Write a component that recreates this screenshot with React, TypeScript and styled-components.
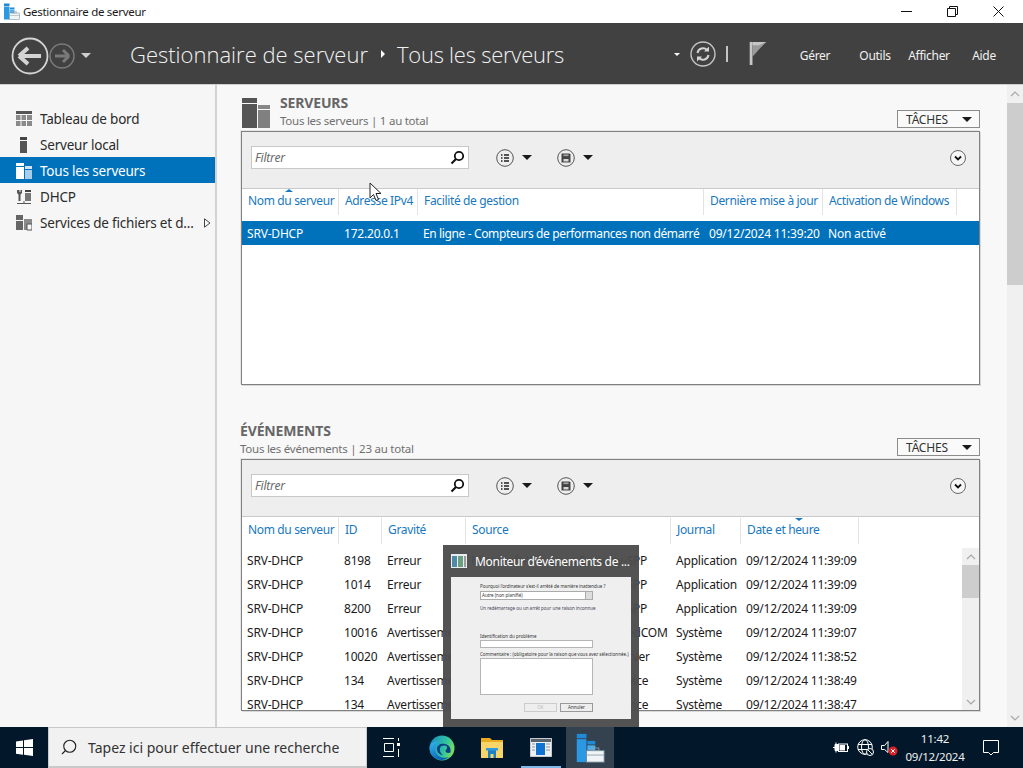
import React from 'react';
import styled, { createGlobalStyle } from 'styled-components';
import { Search } from 'lucide-react';

const FONT = `"Noto Sans", "Open Sans", "Liberation Sans", sans-serif`;

const GlobalStyle = createGlobalStyle`
  html, body { margin: 0; padding: 0; background: #f8f8f8; }
  #root { width: 1023px; height: 768px; }
  * { box-sizing: border-box; }
`;

const Screen = styled.div`
  position: relative;
  width: 1023px;
  height: 768px;
  display: flex;
  flex-direction: column;
  overflow: hidden;
  font-family: ${FONT};
  font-size: 12px;
  letter-spacing: -0.2px;
  color: #1a1a1a;
`;

/* barre de titre */
const TitleBar = styled.div`
  height: 23px;
  flex: none;
  background: #fff;
  display: flex;
  align-items: center;
  padding-left: 3px;
  gap: 3px;
  font-size: 11.5px;
  letter-spacing: -0.3px;
`;
const TitleText = styled.span`
  flex: 1;
`;
const WinButtons = styled.div`
  display: flex;
  height: 23px;
  margin-right: 2px;
`;
const WinButton = styled.div`
  width: 46px;
  display: flex;
  align-items: center;
  justify-content: center;
`;

/* bandeau sombre */
const Header = styled.header`
  height: 62px;
  flex: none;
  background: #414141;
  border-bottom: 1px solid #cfcfcf;
  display: flex;
  align-items: center;
  color: #fff;
  padding: 4px 0 0 11px;
`;
const NavGroup = styled.div`
  width: 119px;
  display: flex;
  align-items: center;
`;
const Crumb = styled.div`
  display: flex;
  align-items: center;
  margin-bottom: 4px;
  font-family: "Open Sans", ${FONT};
  font-weight: 300;
  font-size: 22px;
  letter-spacing: 0;
  color: #f2f2f2;
  flex: 1;
`;
const CrumbArrow = styled.span`
  width: 0;
  height: 0;
  margin: 0 12px 0 13px;
  border-left: 4px solid #fff;
  border-top: 4px solid transparent;
  border-bottom: 4px solid transparent;
`;
const CrumbCurrent = styled.span`
  letter-spacing: -0.25px;
`;
const HeaderTools = styled.div`
  display: flex;
  align-items: center;
  margin-right: 17px;
  padding-bottom: 3px;
`;
const ToolDivider = styled.span`
  width: 2px;
  height: 16px;
  background: #c4c4c4;
  margin: 0 21px 0 10px;
`;
const FlagSvg = styled.svg`
  margin-bottom: 3px;
`;
const Menu = styled.nav`
  display: flex;
  align-items: center;
  height: 100%;
  margin-right: 9px;
  font-size: 12px;
  letter-spacing: -0.3px;
  color: #f0f0f0;
`;
const MenuItem = styled.span<{ $w: number }>`
  width: ${(p) => p.$w}px;
  text-align: center;
`;

/* corps */
const Body = styled.div`
  flex: 1;
  display: flex;
  min-height: 0;
`;
const Sidebar = styled.aside`
  width: 217px;
  flex: none;
  background: #f6f6f6;
  border-right: 2px solid #d2d2d2;
  padding-top: 20px;
`;
const SideItem = styled.div<{ $active?: boolean }>`
  height: 26px;
  padding: 1px 0 0 16px;
  display: flex;
  align-items: center;
  gap: 8px;
  width: 215px;
  background: ${(p) => (p.$active ? '#0072bc' : 'transparent')};
  color: ${(p) => (p.$active ? '#fff' : '#2b2b2b')};
  font-size: 13.5px;
`;
const SideLabel = styled.span`
  flex: 1;
  white-space: nowrap;
`;
const SideCaret = styled.svg`
  margin-right: 4px;
`;
const Content = styled.main`
  flex: 1;
  min-width: 0;
  background: #f8f8f8;
  padding: 10px 27px 0 24px;
  overflow: hidden;
`;

const Section = styled.section<{ $gap?: number }>`
  margin-top: ${(p) => p.$gap ?? 0}px;
`;
const SectionHead = styled.div`
  display: flex;
  align-items: flex-end;
  height: 36px;
  padding-bottom: 1px;
`;
const SectionIcon = styled.span`
  display: flex;
  margin: 0 9px 2px 1px;
`;
const SectionTitles = styled.div`
  flex: 1;
  line-height: 18px;
`;
const SectionTitle = styled.div<{ $shift?: number }>`
  margin-left: ${(p) => p.$shift ?? 0}px;
  font-weight: 700;
  font-size: 14px;
  letter-spacing: -0.15px;
  color: #666;
`;
const SectionSub = styled.div<{ $shift?: number }>`
  margin-left: ${(p) => p.$shift ?? 0}px;
  color: #707070;
  font-size: 11.5px;
  letter-spacing: -0.25px;
`;
const TasksButton = styled.div`
  width: 83px;
  height: 18px;
  margin-bottom: 2px;
  border: 1px solid #8c8c8c;
  background: #fafafa;
  display: flex;
  align-items: center;
  justify-content: space-between;
  padding: 0 7px 0 8px;
  font-size: 12px;
  color: #333;
`;
const Caret = styled.span<{ $size?: number; $color?: string; $after?: number; $before?: number }>`
  width: 0;
  height: 0;
  margin-left: ${(p) => p.$before ?? 0}px;
  margin-right: ${(p) => p.$after ?? 0}px;
  border-left: ${(p) => p.$size ?? 5}px solid transparent;
  border-right: ${(p) => p.$size ?? 5}px solid transparent;
  border-top: ${(p) => p.$size ?? 5}px solid ${(p) => p.$color ?? '#1a1a1a'};
`;

const Panel = styled.div<{ $h: number }>`
  height: ${(p) => p.$h}px;
  border: 1px solid #808080;
  background: #fff;
  box-shadow: 1px 1px 0 #d8d8d8, -1px -1px 0 #e6e6e6;
  display: flex;
  flex-direction: column;
  overflow: hidden;
`;
const Toolbar = styled.div`
  height: 57px;
  flex: none;
  background: #eeeeee;
  border-bottom: 1px solid #c9c9c9;
  display: flex;
  align-items: center;
  padding: 0 13px 5px 9px;
`;
const FilterBox = styled.div`
  width: 218px;
  height: 23px;
  background: #fff;
  border: 1px solid #c8c8c8;
  display: flex;
  align-items: center;
  justify-content: space-between;
  padding: 0 3px;
  font-style: italic;
  font-size: 12px;
  color: #6a6a6a;
  margin-right: 27px;
`;
const RoundTool = styled.div`
  display: flex;
  align-items: center;
  gap: 8px;
  width: 61px;
  height: 23px;
`;
const Spacer = styled.div`
  flex: 1;
`;
const Columns = styled.div<{ $cols: string; $h: number; $top?: number }>`
  flex: none;
  height: ${(p) => p.$h}px;
  padding-top: ${(p) => p.$top ?? 0}px;
  display: grid;
  grid-template-columns: ${(p) => p.$cols};
  background: #fff;
`;
const Column = styled.div`
  position: relative;
  height: 26px;
  padding: 3px 0 0 6px;
  border-right: 1px solid #e3e3e3;
  color: #1878c0;
  font-size: 12px;
  letter-spacing: -0.35px;
  white-space: nowrap;
`;
const SortMark = styled.span<{ $down?: boolean; $left: number }>`
  position: absolute;
  top: 0;
  left: ${(p) => p.$left}px;
  width: 0;
  height: 0;
  border-left: 4px solid transparent;
  border-right: 4px solid transparent;
  ${(p) => (p.$down ? 'border-top: 3px solid #1878c0;' : 'border-bottom: 3px solid #1878c0;')}
`;
const Row = styled.div<{ $cols: string; $selected?: boolean }>`
  height: 24px;
  flex: none;
  display: grid;
  grid-template-columns: ${(p) => p.$cols};
  align-items: center;
  background: ${(p) => (p.$selected ? '#0072bc' : '#fff')};
  color: ${(p) => (p.$selected ? '#fff' : '#1a1a1a')};
`;
const Cell = styled.div<{ $tight?: boolean }>`
  padding-left: 5px;
  white-space: nowrap;
  letter-spacing: ${(p) => (p.$tight ? '-0.37px' : 'inherit')};
`;
const ListArea = styled.div`
  flex: 1;
  min-height: 0;
  display: flex;
`;
const ListRows = styled.div`
  flex: 1;
  overflow: hidden;
`;

const ScrollTrack = styled.div<{ $w: number }>`
  width: ${(p) => p.$w}px;
  flex: none;
  background: #f0f0f0;
  display: flex;
  flex-direction: column;
`;
const ScrollArrow = styled.div<{ $h: number }>`
  height: ${(p) => p.$h}px;
  flex: none;
  display: flex;
  align-items: center;
  justify-content: center;
`;
const ScrollThumb = styled.div<{ $h: number }>`
  height: ${(p) => p.$h}px;
  flex: none;
  background: #cdcdcd;
`;
const ScrollRest = styled.div`
  flex: 1;
`;

/* barre des tâches */
const Taskbar = styled.footer`
  height: 41px;
  flex: none;
  background: #02182a;
  display: flex;
  align-items: stretch;
  color: #fff;
`;
const StartButton = styled.div`
  width: 48px;
  display: flex;
  align-items: center;
  justify-content: center;
`;
const SearchBar = styled.div`
  width: 319px;
  background: #f1f1f1;
  border: 1px solid #c9c9c9;
  border-bottom-width: 2px;
  display: flex;
  align-items: center;
  gap: 10px;
  padding-left: 11px;
  color: #333;
  font-size: 14px;
  letter-spacing: 0;
`;
const TaskSlot = styled.div<{ $w: number; $active?: boolean; $open?: boolean }>`
  position: relative;
  width: ${(p) => p.$w}px;
  display: flex;
  align-items: center;
  justify-content: center;
  background: ${(p) => (p.$active ? '#33424e' : 'transparent')};
  ${(p) =>
    p.$open &&
    `&::after {
      content: '';
      position: absolute;
      left: 5px;
      right: 5px;
      bottom: 0;
      height: 2px;
      background: #7fb8e6;
    }`}
`;
const Tray = styled.div`
  flex: 1;
  display: flex;
  align-items: center;
  justify-content: flex-end;
`;
const TrayIcon = styled.span<{ $w: number }>`
  width: ${(p) => p.$w}px;
  display: flex;
  justify-content: center;
`;
const Clock = styled.div`
  width: 72px;
  text-align: center;
  font-size: 11.5px;
  line-height: 18px;
  letter-spacing: -0.2px;
  color: #f0f0f0;
`;
const NotifSlot = styled.div`
  width: 40px;
  margin-right: 12px;
  display: flex;
  justify-content: center;
`;

/* aperçu de fenêtre */
const Peek = styled.div`
  position: absolute;
  left: 443px;
  top: 545px;
  width: 196px;
  height: 182px;
  background: rgba(76, 76, 76, 0.96);
  padding: 0 8px;
  color: #fff;
`;
const PeekTitle = styled.div`
  height: 32px;
  display: flex;
  align-items: center;
  gap: 8px;
  font-size: 12px;
  letter-spacing: -0.3px;
  white-space: nowrap;
  overflow: hidden;
`;
const PeekBody = styled.div`
  width: 180px;
  height: 142px;
  background: #efefef;
  padding: 6px 38px 0 29px;
  color: #333;
  font-size: 4.5px;
  letter-spacing: 0;
  line-height: 7px;
  white-space: nowrap;
`;
const PeekSelect = styled.div`
  display: flex;
  justify-content: space-between;
  height: 9px;
  margin-top: 1px;
  background: #fff;
  border: 1px solid #aaa;
  line-height: 7px;
  padding-left: 1px;
`;
const PeekSelectArrow = styled.span`
  width: 7px;
  background: #ddd;
  border-left: 1px solid #aaa;
`;
const PeekNote = styled.div`
  margin-top: 5px;
  margin-bottom: 21px;
  color: #445;
`;
const PeekInput = styled.div<{ $h: number }>`
  height: ${(p) => p.$h}px;
  background: #fff;
  border: 1px solid #b5b5b5;
  margin-bottom: 3px;
`;
const PeekButtons = styled.div`
  display: flex;
  justify-content: flex-end;
  gap: 3px;
  margin-top: 8px;
`;
const PeekButton = styled.div<{ $off?: boolean }>`
  width: 33px;
  height: 9px;
  background: #eee;
  border: 1px solid ${(p) => (p.$off ? '#ccc' : '#999')};
  color: ${(p) => (p.$off ? '#bbb' : '#333')};
  text-align: center;
  line-height: 7px;
`;
const Pointer = styled.svg`
  position: absolute;
  left: 369px;
  top: 182px;
`;
const NoShrink = styled.span`
  display: flex;
  flex: none;
`;

/* icônes */
const AppIcon = ({ size = 17 }: { size?: number }) => (
  <svg width={size} height={size} viewBox="0 0 34 34">
    <rect x="2" y="1" width="11" height="5" fill="#1f8ad6" />
    <rect x="2" y="7" width="11" height="26" fill="#2b98e4" />
    <rect x="14" y="9" width="9" height="4" fill="#1f8ad6" />
    <rect x="14" y="14" width="9" height="6" fill="#4aaeea" />
    <rect x="13" y="20" width="20" height="13" fill="#f0f4f6" stroke="#6e8796" />
    <rect x="19" y="17" width="8" height="3" fill="none" stroke="#8aa0ad" />
    <path d="M13 25h20" stroke="#8aa0ad" />
  </svg>
);
const ArrowCircle = ({ size, color, sw }: { size: number; color: string; sw: number }) => (
  <svg width={size} height={size} viewBox="0 0 38 38">
    <circle cx="19" cy="19" r="17.5" fill="none" stroke={color} strokeWidth={sw} />
    <path d="M8 19h22M8 19l9-8M8 19l9 8" fill="none" stroke={color} strokeWidth="4" />
  </svg>
);
const ForwardCircle = () => (
  <svg width="26" height="26" viewBox="0 0 26 26">
    <circle cx="13" cy="13" r="12" fill="none" stroke="#7a7a7a" strokeWidth="1.5" />
    <path d="M20 13H6M20 13l-6-6M20 13l-6 6" fill="none" stroke="#7a7a7a" strokeWidth="3" />
  </svg>
);
const RefreshCircle = () => (
  <svg width="26" height="26" viewBox="0 0 26 26">
    <circle cx="13" cy="13" r="12" fill="none" stroke="#c4c4c4" strokeWidth="1.4" />
    <path d="M7.500 12a5.600 5.600 0 0 1 9.600-3M18.500 14a5.600 5.600 0 0 1-9.600 3" fill="none" stroke="#d4d4d4" strokeWidth="2" />
    <path d="M19 5.500v5h-5zM7 20.500v-5h5z" fill="#d4d4d4" />
  </svg>
);
const Flag = () => (
  <FlagSvg width="18" height="24" viewBox="0 0 18 26">
    <rect x="0" y="1" width="3" height="25" fill="#c6c6c6" />
    <path d="M3 1h15l-7 7-8 9z" fill="#9a9a9a" />
    <path d="M3 1h15l-8 3.500H3z" fill="#c6c6c6" />
  </FlagSvg>
);
const Minimize = () => (
  <svg width="11" height="11" viewBox="0 0 11 11"><path d="M0 5.500h11" stroke="#111" /></svg>
);
const Restore = () => (
  <svg width="11" height="11" viewBox="0 0 11 11">
    <path d="M.5 2.500h8v8h-8zM2.500 2.500v-2h8v8h-2" fill="none" stroke="#111" />
  </svg>
);
const Close = () => (
  <svg width="11" height="11" viewBox="0 0 11 11"><path d="M.5.500l10 10M10.500.500l-10 10" stroke="#111" /></svg>
);
const DashIcon = () => (
  <svg width="16" height="16" viewBox="0 0 16 16">
    <rect y="0" width="16" height="3" fill="#555" />
    <path d="M0 4h4.500v5H0zM5.500 4H10v5H5.500zM11 4h5v5h-5zM0 10h4.500v5H0zM5.500 10H10v5H5.500zM11 10h5v5h-5z" fill="#8a8a8a" />
  </svg>
);
const LocalIcon = () => (
  <svg width="16" height="16" viewBox="0 0 16 16">
    <rect x="4" y="0" width="7" height="3" fill="#444" />
    <rect x="4" y="4" width="7" height="12" fill="#555" />
  </svg>
);
const AllIcon = () => (
  <svg width="16" height="16" viewBox="0 0 16 16">
    <rect y="0" width="8" height="3" fill="#fff" />
    <rect y="4" width="8" height="12" fill="#fff" />
    <rect x="9" y="3" width="7" height="3" fill="#cfe3f3" />
    <rect x="9" y="7" width="7" height="9" fill="#a8cdea" />
  </svg>
);
const DhcpIcon = () => (
  <svg width="16" height="16" viewBox="0 0 16 16">
    <path d="M1 1v3l1.500 1.500V12h2V5.500L6 4V1L4.500 1v2h-1V1z" fill="#555" />
    <rect x="9" y="1" width="6" height="2" fill="#444" />
    <rect x="9" y="4" width="6" height="8" fill="#777" />
    <path d="M1 14.500h14M8 12v3" stroke="#555" />
  </svg>
);
const FilesIcon = () => (
  <svg width="16" height="16" viewBox="0 0 16 16">
    <path d="M0 0h7v5H0zM0 6h7v9H0z" fill="#666" />
    <path d="M8 4h8v11H8z" fill="#8a8a8a" />
    <path d="M11 9h5v6h-5z" fill="#f6f6f6" stroke="#555" />
  </svg>
);
const ServersBig = () => (
  <svg width="29" height="30" viewBox="0 0 29 30">
    <rect x="0" y="0" width="15" height="5" fill="#555" />
    <rect x="0" y="6" width="15" height="24" fill="#555" />
    <rect x="16" y="7" width="12" height="4" fill="#888" />
    <rect x="16" y="12" width="12" height="18" fill="#808080" />
  </svg>
);
const Magnifier = () => (
  <svg width="15" height="15" viewBox="0 0 15 15">
    <circle cx="9" cy="6" r="4.200" fill="none" stroke="#111" strokeWidth="1.800" />
    <path d="M6 9l-4.500 4.500" stroke="#111" strokeWidth="2.200" />
  </svg>
);
const ListRound = () => (
  <svg width="18" height="18" viewBox="0 0 18 18">
    <circle cx="9" cy="9" r="8.300" fill="none" stroke="#555" />
    <path d="M5 6h1.500M5 9h1.500M5 12h1.500M8 6h5M8 9h5M8 12h5" stroke="#222" strokeWidth="1.600" />
  </svg>
);
const SaveRound = () => (
  <svg width="18" height="18" viewBox="0 0 18 18">
    <circle cx="9" cy="9" r="8.300" fill="none" stroke="#555" />
    <path d="M4.500 4.500h8l1 1v8h-9z" fill="#444" />
    <rect x="6.500" y="5.500" width="5" height="1.600" fill="#a8a8a8" />
    <rect x="6.500" y="10" width="5" height="2.500" fill="#d8d8d8" />
  </svg>
);
const ChevronRound = () => (
  <svg width="16" height="16" viewBox="0 0 16 16">
    <circle cx="8" cy="8" r="7.500" fill="#f6f6f6" stroke="#666" />
    <path d="M5 6.500l3 3 3-3" fill="none" stroke="#111" strokeWidth="1.800" />
  </svg>
);
const ScrollChevron = ({ down }: { down?: boolean }) => (
  <svg width="10" height="6" viewBox="0 0 10 6">
    <path d={down ? 'M1 1l4 4 4-4' : 'M1 5l4-4 4 4'} fill="none" stroke="#a8a8a8" strokeWidth="1.200" />
  </svg>
);
const WindowsLogo = () => (
  <svg width="17" height="17" viewBox="0 0 17 17">
    <path d="M0 2.400l7-1v6.700H0zM8 1.300L17 0v8.100H8zM0 9h7v6.700l-7-1zM8 9h9v8l-9-1.300z" fill="#fff" />
  </svg>
);
const TaskView = () => (
  <svg width="17" height="19" viewBox="0 0 17 19">
    <path d="M0 .5h11M0 18.500h11M1.500 5.500h9v8h-9z" fill="none" stroke="#fff" />
    <rect x="14" y="5" width="3" height="3" fill="#fff" />
    <path d="M15.500 0v3M15.500 11v8" stroke="#fff" />
  </svg>
);
const EdgeLogo = () => (
  <svg width="26" height="26" viewBox="0 0 26 26">
    <defs>
      <linearGradient id="edgeTop" x1="0" y1="0.300" x2="1" y2="0.600">
        <stop offset="0" stopColor="#1a8fc8" />
        <stop offset="0.600" stopColor="#2fc4a0" />
        <stop offset="1" stopColor="#7ee05a" />
      </linearGradient>
      <linearGradient id="edgeLow" x1="0" y1="0" x2="0.600" y2="1">
        <stop offset="0" stopColor="#35b8f0" />
        <stop offset="1" stopColor="#0a5db0" />
      </linearGradient>
    </defs>
    <circle cx="13" cy="13" r="12.500" fill="url(#edgeTop)" />
    <path d="M.6 13C1 8 6 5.500 10 7c-4 2-5 7-3 11 2 4 8 6 13 4-2.500 2-5 3-7.500 3C6 25 .4 20 .6 13z" fill="url(#edgeLow)" />
    <path d="M8 14c0-4 4-6 8-5 5 1 6 5 5.500 8.500-2 1-5 .5-5-1.500 0-1.500 2-2 1.500-4-1-2-6-2-7 1-.6 2 0 5 3 7.500C10 19.500 8 17 8 14z" fill="#0b3f86" />
  </svg>
);
const FolderIcon = () => (
  <svg width="22" height="21" viewBox="0 0 22 21">
    <path d="M0 1h9l2 2h11v18H0z" fill="#e9ac20" />
    <rect x="0" y="5" width="22" height="16" fill="#f8d568" />
    <path d="M7 21v-8h8v8h-2.500v-4h-3v4z" fill="#1d7fc4" />
    <rect x="5" y="11" width="12" height="2.500" fill="#2f9ae0" />
  </svg>
);
const EventIcon = () => (
  <svg width="22" height="19" viewBox="0 0 22 19">
    <rect x="0" y="0" width="22" height="19" fill="#eef1f3" stroke="#9aa3a9" />
    <rect x="1" y="1" width="20" height="3" fill="#59636b" />
    <rect x="6" y="5" width="9" height="12" fill="#1172cf" />
    <path d="M2 6h3M2 9h3M2 12h3M16 6h4M16 9h4M16 12h4" stroke="#8a949b" />
  </svg>
);
const PeekIcon = () => (
  <svg width="16" height="14" viewBox="0 0 16 14">
    <rect width="16" height="14" fill="#e8edf0" />
    <rect x="1" y="2" width="5" height="11" fill="#4f8ba8" />
    <rect x="7" y="2" width="5" height="11" fill="#6aa07f" />
    <rect x="13" y="2" width="2" height="11" fill="#9a9a9a" />
  </svg>
);
const PowerIcon = () => (
  <svg width="16" height="13" viewBox="0 0 16 13">
    <path d="M0 6.500h2M2 3.500h3v6H2zM3 1.500v2M3 9.500v2" stroke="#fff" fill="#fff" />
    <rect x="5.500" y="3" width="9" height="7.500" fill="#02182a" stroke="#fff" />
    <rect x="6.500" y="4" width="5.500" height="5.500" fill="#fff" />
    <rect x="15" y="5" width="1" height="3" fill="#fff" />
  </svg>
);
const GlobeIcon = () => (
  <svg width="17" height="17" viewBox="0 0 17 17">
    <g fill="none" stroke="#fff">
      <circle cx="8" cy="8" r="7.300" />
      <ellipse cx="8" cy="8" rx="3.500" ry="7.300" />
      <path d="M1 5.500h14M1 10.500h14" />
    </g>
    <circle cx="13" cy="13" r="3.500" fill="#02182a" stroke="#fff" />
    <path d="M11 11l4 4" stroke="#fff" />
  </svg>
);
const SoundIcon = () => (
  <svg width="17" height="17" viewBox="0 0 17 17">
    <path d="M.5 6.500h3l3.500-4v11l-3.500-3h-3z" fill="none" stroke="#fff" />
    <circle cx="12" cy="12" r="4.500" fill="#d8202a" />
    <path d="M10.200 10.200l3.600 3.600M13.800 10.200l-3.600 3.600" stroke="#fff" />
  </svg>
);
const NotifIcon = () => (
  <svg width="17" height="16" viewBox="0 0 17 16">
    <path d="M.5.500h15v12h-5l-2.500 2.500-2.500-2.500h-5z" fill="none" stroke="#fff" />
  </svg>
);

const serverCols = '97px 79px 286px 119px 134px 1fr';
const eventCols = '97px 43px 84px 205px 70px 118px 1fr';

const eventRows = [
  ['8198', 'Erreur', 'Microsoft-Windows-Security-SPP', 'Application', '09/12/2024 11:39:09'],
  ['1014', 'Erreur', 'Microsoft-Windows-Security-SPP', 'Application', '09/12/2024 11:39:09'],
  ['8200', 'Erreur', 'Microsoft-Windows-Security-SPP', 'Application', '09/12/2024 11:39:09'],
  ['10016', 'Avertissement', 'Microsoft-Windows-DistributedCOM', 'Système', '09/12/2024 11:39:07'],
  ['10020', 'Avertissement', 'Microsoft-Windows-DHCP-Server', 'Système', '09/12/2024 11:38:52'],
  ['134', 'Avertissement', 'Microsoft-Windows-Time-Service', 'Système', '09/12/2024 11:38:49'],
  ['134', 'Avertissement', 'Microsoft-Windows-Time-Service', 'Système', '09/12/2024 11:38:47'],
];

const Scrollbar = ({ w, arrow, thumb }: { w: number; arrow: number; thumb: number }) => (
  <ScrollTrack $w={w}>
    <ScrollArrow $h={arrow}><ScrollChevron /></ScrollArrow>
    <ScrollThumb $h={thumb} />
    <ScrollRest />
    <ScrollArrow $h={arrow}><ScrollChevron down /></ScrollArrow>
  </ScrollTrack>
);

const PanelTools = () => (
  <Toolbar>
    <FilterBox>
      Filtrer
      <Magnifier />
    </FilterBox>
    <RoundTool><ListRound /><Caret /></RoundTool>
    <RoundTool><SaveRound /><Caret /></RoundTool>
    <Spacer />
    <ChevronRound />
  </Toolbar>
);

const App: React.FC = () => {
  return (
    <Screen>
      <GlobalStyle />
      <TitleBar>
        <AppIcon />
        <TitleText>Gestionnaire de serveur</TitleText>
        <WinButtons>
          <WinButton><Minimize /></WinButton>
          <WinButton><Restore /></WinButton>
          <WinButton><Close /></WinButton>
        </WinButtons>
      </TitleBar>

      <Header>
        <NavGroup>
          <ArrowCircle size={38} color="#d4d4d4" sw={1.800} />
          <ForwardCircle />
          <Caret $color="#cfcfcf" $before={6} />
        </NavGroup>
        <Crumb>
          Gestionnaire de serveur
          <CrumbArrow />
          <CrumbCurrent>Tous les serveurs</CrumbCurrent>
        </Crumb>
        <HeaderTools>
          <Caret $size={3} $color="#fff" $after={10} />
          <RefreshCircle />
          <ToolDivider />
          <Flag />
        </HeaderTools>
        <Menu>
          <MenuItem $w={62}>Gérer</MenuItem>
          <MenuItem $w={58}>Outils</MenuItem>
          <MenuItem $w={50}>Afficher</MenuItem>
          <MenuItem $w={60}>Aide</MenuItem>
        </Menu>
      </Header>

      <Body>
        <Sidebar>
          <SideItem><DashIcon /><SideLabel>Tableau de bord</SideLabel></SideItem>
          <SideItem><LocalIcon /><SideLabel>Serveur local</SideLabel></SideItem>
          <SideItem $active><AllIcon /><SideLabel>Tous les serveurs</SideLabel></SideItem>
          <SideItem><DhcpIcon /><SideLabel>DHCP</SideLabel></SideItem>
          <SideItem>
            <FilesIcon />
            <SideLabel>Services de fichiers et d...</SideLabel>
            <SideCaret width="7" height="10" viewBox="0 0 7 10">
              <path d="M.5.800L6 5 .5 9.200z" fill="none" stroke="#444" />
            </SideCaret>
          </SideItem>
        </Sidebar>

        <Content>
          <Section>
            <SectionHead>
              <SectionIcon><ServersBig /></SectionIcon>
              <SectionTitles>
                <SectionTitle>SERVEURS</SectionTitle>
                <SectionSub>Tous les serveurs | 1 au total</SectionSub>
              </SectionTitles>
              <TasksButton>TÂCHES<Caret /></TasksButton>
            </SectionHead>
            <Panel $h={254}>
              <PanelTools />
              <Columns $cols={serverCols} $h={32}>
                <Column>Nom du serveur<SortMark $left={43} /></Column>
                <Column>Adresse IPv4</Column>
                <Column>Facilité de gestion</Column>
                <Column>Dernière mise à jour</Column>
                <Column>Activation de Windows</Column>
              </Columns>
              <Row $cols={serverCols} $selected>
                <Cell>SRV-DHCP</Cell>
                <Cell>172.20.0.1</Cell>
                <Cell $tight>En ligne - Compteurs de performances non démarré</Cell>
                <Cell>09/12/2024 11:39:20</Cell>
                <Cell>Non activé</Cell>
              </Row>
            </Panel>
          </Section>

          <Section $gap={38}>
            <SectionHead>
              <SectionTitles>
                <SectionTitle $shift={-1}>ÉVÉNEMENTS</SectionTitle>
                <SectionSub $shift={-1}>Tous les événements | 23 au total</SectionSub>
              </SectionTitles>
              <TasksButton>TÂCHES<Caret /></TasksButton>
            </SectionHead>
            <Panel $h={252}>
              <PanelTools />
              <Columns $cols={eventCols} $h={31} $top={1}>
                <Column>Nom du serveur</Column>
                <Column>ID</Column>
                <Column>Gravité</Column>
                <Column>Source</Column>
                <Column>Journal</Column>
                <Column>Date et heure<SortMark $down $left={54} /></Column>
              </Columns>
              <ListArea>
                <ListRows>
                  {eventRows.map((r, i) => (
                    <Row key={i} $cols={eventCols}>
                      <Cell>SRV-DHCP</Cell>
                      {r.map((v, j) => <Cell key={j}>{v}</Cell>)}
                    </Row>
                  ))}
                </ListRows>
                <Scrollbar w={17} arrow={17} thumb={33} />
              </ListArea>
            </Panel>
          </Section>
        </Content>

        <Scrollbar w={16} arrow={18} thumb={182} />
      </Body>

      <Taskbar>
        <StartButton><WindowsLogo /></StartButton>
        <SearchBar>
          <Search size={18} strokeWidth={1.500} color="#222" style={{ transform: 'scaleX(-1)' }} />
          Tapez ici pour effectuer une recherche
        </SearchBar>
        <TaskSlot $w={49}><TaskView /></TaskSlot>
        <TaskSlot $w={51}><EdgeLogo /></TaskSlot>
        <TaskSlot $w={49}><FolderIcon /></TaskSlot>
        <TaskSlot $w={50} $open><EventIcon /></TaskSlot>
        <TaskSlot $w={48} $active><AppIcon size={30} /></TaskSlot>
        <Tray>
          <TrayIcon $w={20}><PowerIcon /></TrayIcon>
          <TrayIcon $w={28}><GlobeIcon /></TrayIcon>
          <TrayIcon $w={20}><SoundIcon /></TrayIcon>
          <Clock>11:42<br />09/12/2024</Clock>
          <NotifSlot><NotifIcon /></NotifSlot>
        </Tray>
      </Taskbar>

      <Peek>
        <PeekTitle>
          <NoShrink><PeekIcon /></NoShrink>
          Moniteur d’événements de ...
        </PeekTitle>
        <PeekBody>
          Pourquoi l’ordinateur s’est-il arrêté de manière inattendue ?
          <PeekSelect>Autre (non planifié)<PeekSelectArrow /></PeekSelect>
          <PeekNote>Un redémarrage ou un arrêt pour une raison inconnue</PeekNote>
          Identification du problème
          <PeekInput $h={8} />
          Commentaire : (obligatoire pour la raison que vous avez sélectionnée.)
          <PeekInput $h={37} />
          <PeekButtons>
            <PeekButton $off>OK</PeekButton>
            <PeekButton>Annuler</PeekButton>
          </PeekButtons>
        </PeekBody>
      </Peek>

      <Pointer width="13" height="20" viewBox="0 0 13 20">
        <path d="M1 1v15l3.500-3.500 2.500 6 2.500-1-2.500-6H12z" fill="#fff" stroke="#222" />
      </Pointer>
    </Screen>
  );
};

export default App;
